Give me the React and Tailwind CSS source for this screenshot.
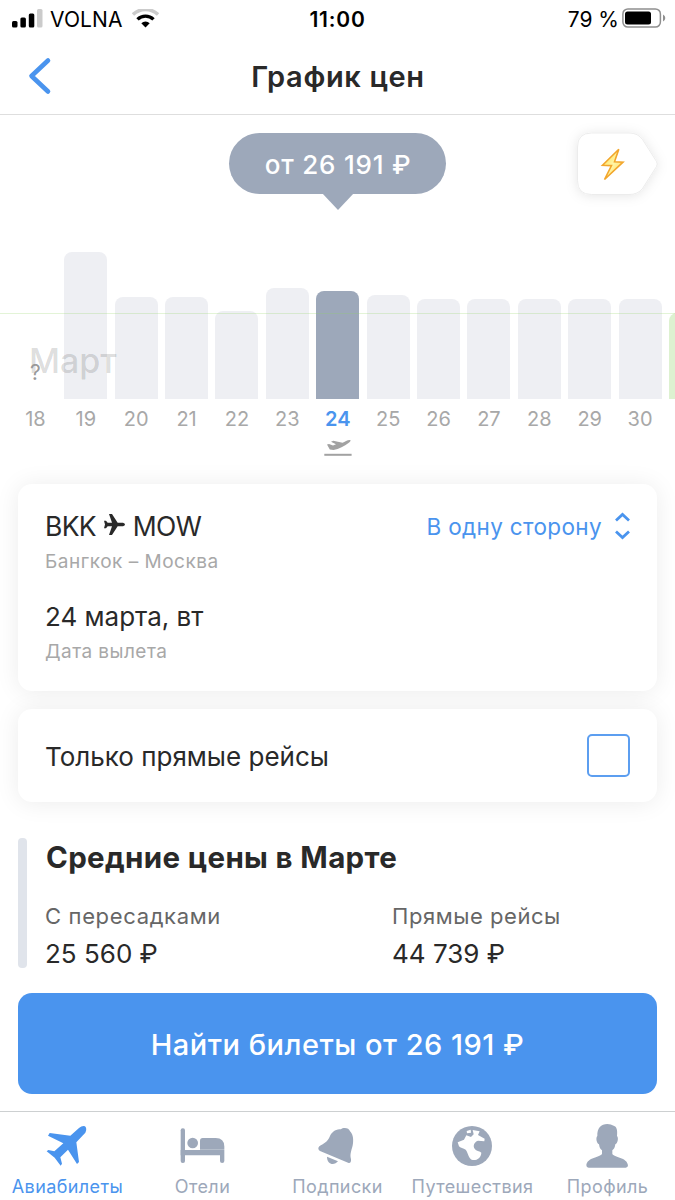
import React from 'react';

// Цены по дням: высота столбца в пикселях
const days = [
    { day: 18, height: 0 },
    { day: 19, height: 147 },
    { day: 20, height: 102 },
    { day: 21, height: 102 },
    { day: 22, height: 88 },
    { day: 23, height: 111 },
    { day: 24, height: 108, active: true },
    { day: 25, height: 104 },
    { day: 26, height: 100.5 },
    { day: 27, height: 100.5 },
    { day: 28, height: 100.5 },
    { day: 29, height: 100.5 },
    { day: 30, height: 100.5 },
    { day: 31, height: 86, best: true },
];

const barColor = (item) => {
    if (item.active) return 'bg-[#9da8ba]';
    if (item.best) return 'bg-[#ddf1d0]';
    return 'bg-[#eeeff3]';
};

const StatusBar = () => (
    <div className="grid h-[38px] grid-cols-3 items-center text-[21px] leading-none text-black">
        <div className="flex items-center pl-3">
            <svg width="31" height="20" viewBox="0 0 31 20">
                <rect x="0" y="12" width="5.5" height="6.5" rx="1.5" />
                <rect x="8.4" y="8.5" width="5.5" height="10" rx="1.5" />
                <rect x="16.8" y="4.5" width="5.5" height="14" rx="1.5" />
                <rect x="25" y="0" width="5.5" height="18.5" rx="1.5" fill="#cbcbcb" />
            </svg>
            <span className="ml-[7px] tracking-[0.1px]">VOLNA</span>
            <svg className="ml-[9px]" width="27" height="20" viewBox="0 0 27 20" fill="none">
                <path d="M1 5.500a18 18 0 0 1 25 0" stroke="#cbcbcb" strokeWidth="3.4" />
                <path d="M5.500 10.400a11.500 11.500 0 0 1 16 0" stroke="#000" strokeWidth="3.4" />
                <path d="M9.300 14.200a6 6 0 0 1 8.400 0l-4.200 4.300z" fill="#000" />
            </svg>
        </div>
        <div className="text-center font-semibold tracking-[0.8px]">11:00</div>
        <div className="flex items-center justify-end pr-[9px]">
            <span className="mr-[3px] whitespace-nowrap">79 %</span>
            <svg className="-translate-y-px" width="44" height="20" viewBox="0 0 44 20">
                <rect x="0.9" y="0.9" width="37.5" height="18.2" rx="5" fill="none" stroke="#8f8f8f" strokeWidth="1.5" />
                <rect x="3" y="3.5" width="26" height="13" rx="2.5" />
                <path d="M41 6.5q2.3 1 2.3 3.5t-2.3 3.5z" fill="#8f8f8f" />
            </svg>
        </div>
    </div>
);

const Header = () => (
    <header className="grid h-[77px] grid-cols-[80px_1fr_80px] items-center border-b border-[#dedede]">
        <svg className="ml-7" width="24" height="38" viewBox="0 0 24 38" fill="none" stroke="#4a94ee" strokeWidth="4.6" strokeLinecap="round" strokeLinejoin="round">
            <path d="M20 3.5L3.5 19 20 34.5" />
        </svg>
        <h1 className="pt-0.5 pl-px text-center text-[29px] font-semibold tracking-[0.65px] whitespace-nowrap">График цен</h1>
    </header>
);

const BoltTag = () => (
    <svg className="absolute top-0 right-0" width="115" height="100" viewBox="0 0 115 100">
        <defs>
            <filter id="tagShadow" x="-30%" y="-30%" width="160%" height="160%">
                <feDropShadow dx="0" dy="1" stdDeviation="6" floodColor="#000" floodOpacity="0.1" />
            </filter>
            <linearGradient id="bolt" x1="0" y1="0" x2="1" y2="1">
                <stop offset="0" stopColor="#ffd93a" />
                <stop offset="0.5" stopColor="#fff6a8" />
                <stop offset="1" stopColor="#ffd040" />
            </linearGradient>
        </defs>
        <path d="M31.500 18H69q9 0 13.500 6.500L96.500 46.500q1.500 2.500 0 5L82.500 73.500q-4.500 6-13.500 6H31.500q-14 0-14-14V32q0-14 14-14z" fill="#fff" stroke="#e8e8e8" strokeWidth="0.8" filter="url(#tagShadow)" />
        <path d="M58.800 34.200L42.500 50.200 51.500 50.600 44.500 64.500 63 47.200 54.500 46.800z" fill="url(#bolt)" stroke="#f2a62c" strokeWidth="1.600" strokeLinejoin="miter" />
    </svg>
);

const PriceChart = () => (
    <section className="relative h-[369px] overflow-hidden">
        <div className="flex justify-center pt-[18px]">
            <div className="relative flex h-[61px] w-[217px] items-center justify-center rounded-full bg-[#9da8ba] pt-0.5 pl-px text-[26px] font-medium tracking-[0.8px] whitespace-nowrap text-white">
                от 26 191 ₽
                <svg className="absolute top-[60px] left-[93px]" width="32" height="17" viewBox="0 0 32 17">
                    <path d="M0 0h32L16 17z" fill="#9da8ba" />
                </svg>
            </div>
        </div>
        <BoltTag />

        {/* Столбцы */}
        <div className="flex h-[205px] items-end pl-[10.2px]">
            {days.map((item) => (
                <div key={item.day} className="flex w-[50.4px] shrink-0 justify-center">
                    <div className={`w-[43px] rounded-t-[8px] ${barColor(item)}`} style={{ height: item.height }} />
                </div>
            ))}
        </div>
        <div className="absolute top-[198px] left-0 h-px w-full bg-[#8fd45f]/25" />
        <div className="absolute top-[226px] left-[29px] text-[34px] leading-10 font-medium text-black/15">Март</div>
        <div className="absolute top-[244px] left-[30px] text-[21px] leading-7 text-[#999]">?</div>

        {/* Подписи дней */}
        <div className="flex h-[39px] items-center pl-[10.2px] text-[20px]">
            {days.slice(0, 13).map((item) => (
                <div key={item.day} className={`w-[50.4px] shrink-0 text-center ${item.active ? 'font-semibold text-[#4a94ee]' : 'text-[#a8a8a8]'}`}>
                    {item.day}
                </div>
            ))}
        </div>
        <svg className="mx-auto block" width="28" height="19" viewBox="0 0 28 19" fill="#a2a2a2">
            <path d="M3 6.600L5 6 9 7.400 12 6.300 7 3.800 9.300 2.800 18.500 4.800C21 3.800 23.500 1.800 26 2 27.200 2.200 26.500 3.500 24.500 5 20.500 8 15 11 9.500 12L5.800 11.500z" />
            <rect x="0.300" y="15.800" width="27.300" height="2" />
        </svg>
    </section>
);

const RouteCard = () => (
    <div className="h-[207px] rounded-[14px] bg-white pt-[22px] pr-[26px] pl-[27px] shadow-[0_1px_24px_rgba(0,0,0,0.08)]">
        <div className="flex h-[41px] items-center justify-between">
            <div className="flex items-center text-[26.5px] tracking-[-0.7px]">
                <span>BKK</span>
                <svg className="mr-[8px] ml-[8px] -translate-y-0.5" width="21" height="21" viewBox="313 117 63 63" fill="#292929">
                    <path d="M328 117H337L354 143H370Q376 145 376 148.500T370 154H354L337 180H328L337 154H324L319 160H313L316 148.500 313 137H319L324 143H337Z" />
                </svg>
                <span>MOW</span>
            </div>
            <button className="flex items-center text-[22.5px] tracking-[0.35px] whitespace-nowrap text-[#4a94ee]">
                В одну сторону
                <svg className="ml-3 -translate-y-px" width="17" height="28" viewBox="0 0 17 28" fill="none" stroke="#4a94ee" strokeWidth="2.8">
                    <path d="M2 8.500l6.500-6 6.500 6M2 19.500l6.500 6 6.500-6" />
                </svg>
            </button>
        </div>
        <div className="text-[19px] leading-[29px] tracking-[0.5px] text-[#a8a8a8]">Бангкок – Москва</div>
        <div className="mt-[21px] text-[26px] leading-10">24 марта, вт</div>
        <div className="text-[19px] leading-[30px] tracking-[0.45px] text-[#a8a8a8]">Дата вылета</div>
    </div>
);

const DirectCard = () => (
    <label className="mt-[18px] flex h-[93px] items-center justify-between rounded-[14px] bg-white px-[27px] text-[26px] shadow-[0_1px_24px_rgba(0,0,0,0.08)]">
        <span className="pt-0.5">Только прямые рейсы</span>
        <span className="h-[43px] w-[43px] rounded-[5px] border-2 border-[#4a94ee]/90" />
    </label>
);

const AveragePrices = () => (
    <section className="mt-9 flex h-[130px]">
        <div className="w-[9px] rounded-[4px] bg-[#e0e4eb]" />
        <div className="flex-1 pl-[18px]">
            <h2 className="-mt-px pl-px text-[29.5px] leading-10 font-bold tracking-[0.35px]">Средние цены в Марте</h2>
            <div className="mt-5 grid grid-cols-[347px_1fr]">
                <div>
                    <div className="text-[22px] leading-[39px] tracking-[0.65px] text-[#666]">С пересадками</div>
                    <div className="text-[26px] leading-9">25 560 ₽</div>
                </div>
                <div>
                    <div className="text-[22px] leading-[39px] tracking-[0.55px] text-[#666]">Прямые рейсы</div>
                    <div className="text-[26px] leading-9">44 739 ₽</div>
                </div>
            </div>
        </div>
    </section>
);

const tabs = [
    {
        title: 'Авиабилеты',
        active: true,
        icon: (
            <svg width="44" height="44" viewBox="139 72 132 132" fill="currentColor">
                <path d="M150 99L212 107 238 84Q248 76 256 79 263 86 257 98L230 127 238 186 232 192 205 149 182 172 187 191 183 197 165 173 141 154 146 150 164 154 191 130 145 107Z" />
            </svg>
        ),
    },
    {
        title: 'Отели',
        icon: (
            <svg className="overflow-visible" width="44" height="44" viewBox="542 72 132 132" fill="currentColor">
                <rect x="541" y="85" width="13" height="104" rx="6" />
                <circle cx="577" cy="129" r="16" />
                <path d="M599 149V122q0-8 8-8H646q26 0 26 26v9z" />
                <path d="M541 150H672V183q0 6-6.500 6t-6.500-6V166H541z" />
            </svg>
        ),
    },
    {
        title: 'Подписки',
        icon: (
            <svg width="44" height="44" viewBox="228 72 132 132" fill="currentColor">
                <path d="M303 88C308 81 328 82 330 94 338 101 341 115 339 130 337 148 328 160 333 178Q334 190 326 189L240 153Q231 147 238 139C250 130 262 128 270 108 278 92 290 88 303 88Z" />
                <path d="M261 170L294 184C284 196 261 196 261 170z" />
            </svg>
        ),
    },
    {
        title: 'Путешествия',
        icon: (
            <svg width="44" height="44" viewBox="-11 72 132 132" fill="currentColor">
                <circle cx="52" cy="138" r="60" />
                <path d="M9 127L28 119 35 106 49 111 57 103 54 90 75 94 70 105 90 116 89 124 70 122C58 126 54 138 60 146 65 154 73 151 80 158 79 174 66 182 54 180 40 176 41 158 33 149 27 145 16 144 13 139Z" fill="#fff" />
                <path d="M36 93L48 89 49 98 37 100Z" fill="#fff" />
            </svg>
        ),
    },
    {
        title: 'Профиль',
        icon: (
            <svg width="44" height="46" viewBox="393 69 132 138" fill="currentColor">
                <path d="M457 72C438 72 426 84 427 108 422 112 424 130 432 133 434 145 436 147 441 151V162C436 172 396 172 394 196Q394 203 401 203H512Q519 203 519 196C517 172 476 172 472 162V151C477 147 479 145 481 133 489 130 491 112 486 108 488 90 485 79 476 77Q468 72 457 72Z" />
            </svg>
        ),
    },
];

const TabBar = () => (
    <nav className="mt-[17px] grid h-[89px] grid-cols-5 border-t border-[#cdd0d1]">
        {tabs.map((tab) => (
            <div key={tab.title} className={`flex flex-col items-center ${tab.active ? 'text-[#4a94ee]' : 'text-[#9da8ba]'}`}>
                <div className="flex h-[60px] items-center pt-2">{tab.icon}</div>
                <div className="text-[18px] leading-[30px] tracking-[0.4px] whitespace-nowrap">{tab.title}</div>
            </div>
        ))}
    </nav>
);

const App = () => {
    return (
        <div className="h-[1200px] w-[675px] overflow-hidden bg-white font-['Inter','Liberation_Sans',sans-serif] text-[#292929]">
            <StatusBar />
            <Header />
            <PriceChart />
            <main className="px-[18px]">
                <RouteCard />
                <DirectCard />
                <AveragePrices />
                <button className="mt-[25px] h-[101px] w-full rounded-[14px] bg-[#4a94ee] pt-0.5 text-[29px] font-medium tracking-[0.5px] text-white">
                    Найти билеты от 26 191 ₽
                </button>
            </main>
            <TabBar />
        </div>
    );
};

export default App;
